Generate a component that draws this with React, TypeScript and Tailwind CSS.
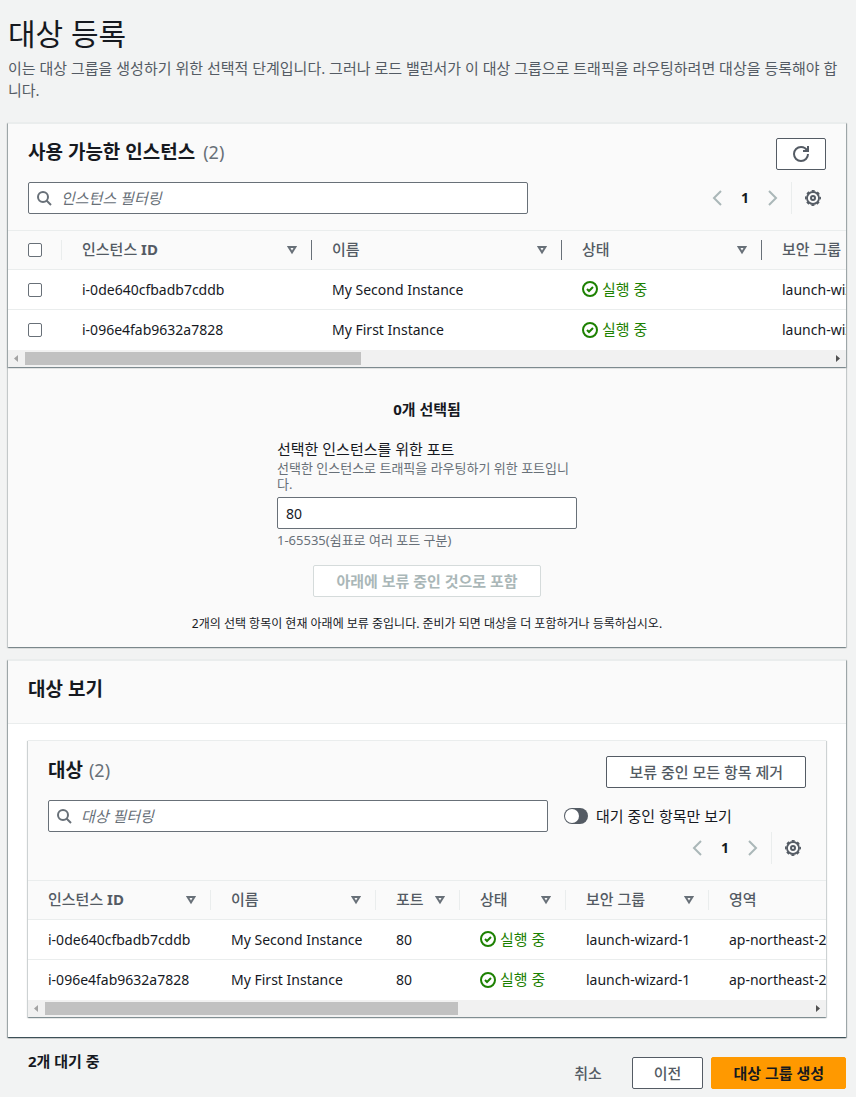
/**
 * Target registration page
 */

import React from 'react';
import clsx from 'clsx';

// ============== DATA ==============

type Instance = {
  id: string;
  name: string;
  port: string;
  securityGroup: string;
  zone: string;
};

const instances: Instance[] = [
  {
    id: 'i-0de640cfbadb7cddb',
    name: 'My Second Instance',
    port: '80',
    securityGroup: 'launch-wizard-1',
    zone: 'ap-northeast-2a',
  },
  {
    id: 'i-096e4fab9632a7828',
    name: 'My First Instance',
    port: '80',
    securityGroup: 'launch-wizard-1',
    zone: 'ap-northeast-2a',
  },
];

const panelShadow =
  'border-t border-[#eaeded] shadow-[0_1px_1px_0_rgba(0,28,36,0.3),1px_1px_1px_0_rgba(0,28,36,0.15),-1px_1px_1px_0_rgba(0,28,36,0.15)]';

// ============== ICONS ==============

function SearchIcon() {
  return (
    <svg viewBox="0 0 16 16" className="size-4 shrink-0" fill="none" stroke="#687078" strokeWidth="2">
      <circle cx="7" cy="7" r="5" />
      <path d="m15 15-4.5-4.5" />
    </svg>
  );
}

function RefreshIcon() {
  return (
    <svg viewBox="0 0 16 16" className="size-4 shrink-0" fill="none" stroke="#545b64" strokeWidth="2">
      <path d="M15 8c0 3.87-3.13 7-7 7s-7-3.13-7-7 3.13-7 7-7c2.79 0 5.2 1.63 6.33 4" />
      <path d="M10 5h5V0" />
    </svg>
  );
}

function ChevronIcon({ next }: { next?: boolean }) {
  return (
    <svg viewBox="0 0 16 16" className="size-4" fill="none" stroke="#aab7b8" strokeWidth="2">
      <path d={next ? 'm4 1 7 7-7 7' : 'm12 1-7 7 7 7'} />
    </svg>
  );
}

function GearIcon() {
  return (
    <svg viewBox="0 0 16 16" className="size-4" fill="none" stroke="#545b64">
      <circle cx="8" cy="8" r="6" strokeWidth="1.8" />
      {/* eight teeth, one centred on each axis and diagonal */}
      <circle cx="8" cy="8" r="7.2" strokeWidth="1.6" strokeDasharray="3 2.655" strokeDashoffset="1.5" />
      <circle cx="8" cy="8" r="2" strokeWidth="2" />
    </svg>
  );
}

function SortIcon() {
  return (
    <svg viewBox="0 0 10 10" className="size-[10px]" fill="none" stroke="#687078" strokeWidth="2">
      <path d="M1.7 2h6.6L5 7.4z" />
    </svg>
  );
}

function CheckCircleIcon() {
  return (
    <svg viewBox="0 0 16 16" className="size-4" fill="none" stroke="#1d8102" strokeWidth="2">
      <circle cx="8" cy="8" r="7" />
      <path d="m5 8 2 2 4-4" />
    </svg>
  );
}

// ============== SHARED PARTS ==============

function Button({ variant = 'normal', className = 'px-[21px]', children, ...rest }: {
  variant?: 'normal' | 'primary' | 'link';
} & React.ButtonHTMLAttributes<HTMLButtonElement>) {
  return (
    <button
      type="button"
      className={clsx(
        'flex h-8 items-center justify-center rounded-xs border text-[15px]',
        variant === 'normal' && 'border-[#545b64] bg-white font-medium text-[#545b64] disabled:border-[#d5dbdb] disabled:font-bold disabled:text-[#aab7b8]',
        variant === 'primary' && 'border-[#ff9900] bg-[#ff9900] font-bold text-[#16191f]',
        variant === 'link' && 'border-transparent font-medium text-[#545b64]',
        className,
      )}
      {...rest}
    >
      {children}
    </button>
  );
}

function SearchBox({ label }: { label: string }) {
  return (
    <div className="flex h-8 w-full max-w-[500px] items-center gap-2 rounded-xs border border-[#687078] bg-white px-[7px]">
      <SearchIcon />
      <input
        type="search"
        aria-label={label}
        placeholder={label}
        className="min-w-0 flex-1 pl-px text-[15px] outline-none placeholder:text-[#687078] placeholder:italic"
      />
    </div>
  );
}

function Pagination() {
  return (
    <div className="flex h-8 items-center">
      <button type="button" aria-label="이전 페이지" className="px-1">
        <ChevronIcon />
      </button>
      <span className="w-8 text-center text-sm font-bold">1</span>
      <button type="button" aria-label="다음 페이지" className="px-1">
        <ChevronIcon next />
      </button>
      <button type="button" aria-label="기본 설정" className="ml-[6px] flex h-8 items-center border-l border-[#eaeded] pr-[5px] pl-[13px]">
        <GearIcon />
      </button>
    </div>
  );
}

function ColumnHeader({ children, sortable = true, dark }: {
  children: React.ReactNode;
  sortable?: boolean;
  dark?: boolean;
}) {
  return (
    <th className="border-b border-[#eaeded] bg-[#fafafa] p-0 text-left text-[15px] font-medium text-[#545b64]">
      <div
        className={clsx(
          'flex h-5 items-center pr-[14px] pl-5',
          sortable && 'border-r',
          dark ? 'border-[#687078]' : 'border-[#eaeded]',
        )}
      >
        {sortable ? (
          <button type="button" className="flex w-full items-center justify-between">
            <span>{children}</span>
            <SortIcon />
          </button>
        ) : (
          children
        )}
      </div>
    </th>
  );
}

function Cell({ children }: { children: React.ReactNode }) {
  return <td className="px-5 py-0 whitespace-nowrap group-not-last:border-b group-not-last:border-[#eaeded]">{children}</td>;
}

function Status() {
  return (
    <span className="flex items-center gap-1 text-[15px] text-[#1d8102]">
      <CheckCircleIcon />
      실행 중
    </span>
  );
}

function RowCheckbox({ label }: { label: string }) {
  return (
    <input
      type="checkbox"
      aria-label={label}
      className="block size-[14px] appearance-none rounded-xs border border-[#687078] bg-white"
    />
  );
}

function ScrollBar({ thumb }: { thumb: number }) {
  return (
    <div className="flex h-[17px] items-center bg-[#f1f1f1]">
      <svg viewBox="0 0 17 17" className="size-[17px] shrink-0" fill="#a3a3a3">
        <path d="M10 5v7L6 8.5z" />
      </svg>
      <div className="flex-1">
        <div className="h-[13px] bg-[#c1c1c1]" style={{ width: `${thumb}%` }} />
      </div>
      <svg viewBox="0 0 17 17" className="size-[17px] shrink-0" fill="#505050">
        <path d="M7 5v7l4-3.5z" />
      </svg>
    </div>
  );
}

// ============== AVAILABLE INSTANCES ==============

function AvailableInstances() {
  return (
    <section className={clsx('bg-[#fafafa]', panelShadow)}>
      <div className={panelShadow}>
        <div className="px-5 pt-[14px] pb-4">
          <div className="flex items-start justify-between">
            <h2 className="flex gap-2 text-[19px] leading-7 font-bold">
              사용 가능한 인스턴스
              <span className="text-lg leading-7 font-normal text-[#687078]">(2)</span>
            </h2>
            <Button aria-label="새로 고침" className="w-[50px]">
              <RefreshIcon />
            </Button>
          </div>
          <div className="mt-3 flex items-center justify-between">
            <SearchBox label="인스턴스 필터링" />
            <Pagination />
          </div>
        </div>

        <div className="overflow-hidden border-t border-[#eaeded]">
          <table className="w-[954px] table-fixed border-separate border-spacing-0 bg-white text-sm">
            <colgroup>
              <col className="w-[54px]" />
              <col className="w-[250px]" />
              <col className="w-[250px]" />
              <col className="w-[200px]" />
              <col className="w-[200px]" />
            </colgroup>
            <thead>
              <tr className="h-[39px]">
                <ColumnHeader sortable={false}>
                  <div className="-mr-[14px] flex h-5 flex-1 items-center border-r border-[#eaeded]">
                    <RowCheckbox label="모두 선택" />
                  </div>
                </ColumnHeader>
                <ColumnHeader dark>인스턴스 <b>ID</b></ColumnHeader>
                <ColumnHeader dark>이름</ColumnHeader>
                <ColumnHeader dark>상태</ColumnHeader>
                <ColumnHeader dark>보안 그룹</ColumnHeader>
              </tr>
            </thead>
            <tbody>
              {instances.map((item) => (
                <tr key={item.id} className="group h-10">
                  <Cell><RowCheckbox label={item.name} /></Cell>
                  <Cell>{item.id}</Cell>
                  <Cell>{item.name}</Cell>
                  <Cell><Status /></Cell>
                  <Cell>{item.securityGroup}</Cell>
                </tr>
              ))}
            </tbody>
          </table>
        </div>
        <ScrollBar thumb={41.8} />
      </div>

      <div className="flex flex-col items-center px-5 pt-[31px] pb-3">
        <p className="text-[15px] leading-[22px] font-bold">0개 선택됨</p>
        <div className="mt-[18px] w-[300px]">
          <label htmlFor="port" className="block text-[15px] leading-[22px]">선택한 인스턴스를 위한 포트</label>
          <p className="text-[13px] leading-4 text-[#687078]">선택한 인스턴스로 트래픽을 라우팅하기 위한 포트입니다.</p>
          <input
            id="port"
            type="text"
            defaultValue="80"
            className="mt-[5px] block h-8 w-full rounded-xs border border-[#687078] bg-white px-2 text-sm"
          />
          <p className="mt-[3px] text-[13px] leading-4 text-[#687078]">1-65535(쉼표로 여러 포트 구분)</p>
        </div>
        <Button disabled className="mt-[17px] px-[22px]">아래에 보류 중인 것으로 포함</Button>
        <p className="mt-4 text-xs leading-[22px]">
          2개의 선택 항목이 현재 아래에 보류 중입니다. 준비가 되면 대상을 더 포함하거나 등록하십시오.
        </p>
      </div>
    </section>
  );
}

// ============== TARGETS ==============

function Targets() {
  return (
    <section className={clsx('mt-3 bg-white', panelShadow)}>
      <div className={clsx('pb-5', panelShadow)}>
        <div className="border-b border-[#eaeded] bg-[#fafafa] px-5 pt-[14px] pb-5">
          <h2 className="text-[19px] leading-7 font-bold">대상 보기</h2>
        </div>

        <div className={clsx('mx-5 mt-4 bg-[#fafafa]', panelShadow)}>
          <div className="px-5 pt-[15px] pb-4">
            <div className="flex items-start justify-between">
              <h3 className="flex gap-[6px] text-[19px] leading-7 font-bold">
                대상
                <span className="text-lg leading-7 font-normal text-[#687078]">(2)</span>
              </h3>
              <Button className="px-[22px]">보류 중인 모든 항목 제거</Button>
            </div>
            <div className="mt-3 flex items-center gap-4">
              <SearchBox label="대상 필터링" />
              <label className="flex shrink-0 items-center gap-2 text-[15px]">
                <input
                  type="checkbox"
                  role="switch"
                  className="h-4 w-6 appearance-none rounded-full bg-[#545b64] p-px before:block before:size-[14px] before:rounded-full before:bg-white checked:before:ml-2"
                />
                대기 중인 항목만 보기
              </label>
            </div>
            <div className="flex justify-end">
              <Pagination />
            </div>
          </div>

          <div className="overflow-hidden border-t border-[#eaeded]">
            <table className="w-[881px] table-fixed border-separate border-spacing-0 bg-white text-sm">
              <colgroup>
                <col className="w-[183px]" />
                <col className="w-[165px]" />
                <col className="w-[84px]" />
                <col className="w-[106px]" />
                <col className="w-[143px]" />
                <col className="w-[200px]" />
              </colgroup>
              <thead>
                <tr className="h-[39px]">
                  <ColumnHeader>인스턴스 <b>ID</b></ColumnHeader>
                  <ColumnHeader>이름</ColumnHeader>
                  <ColumnHeader>포트</ColumnHeader>
                  <ColumnHeader>상태</ColumnHeader>
                  <ColumnHeader>보안 그룹</ColumnHeader>
                  <ColumnHeader>영역</ColumnHeader>
                </tr>
              </thead>
              <tbody>
                {instances.map((item) => (
                  <tr key={item.id} className="group h-10">
                    <Cell>{item.id}</Cell>
                    <Cell>{item.name}</Cell>
                    <Cell>{item.port}</Cell>
                    <Cell><Status /></Cell>
                    <Cell>{item.securityGroup}</Cell>
                    <Cell>{item.zone}</Cell>
                  </tr>
                ))}
              </tbody>
            </table>
          </div>
          <ScrollBar thumb={54} />
        </div>
      </div>
    </section>
  );
}

// ============== PAGE ==============

export default function App() {
  return (
    <main className="min-h-screen bg-[#f2f3f3] pt-4 pr-[10px] pb-2 pl-2 font-['Noto_Sans','Noto_Sans_CJK_KR',sans-serif] text-[#16191f]">
      <h1 className="text-3xl leading-9">대상 등록</h1>
      <p className="mt-[5px] mb-[21px] text-[15px] leading-[22px] text-[#545b64]">
        이는 대상 그룹을 생성하기 위한 선택적 단계입니다. 그러나 로드 밸런서가 이 대상 그룹으로 트래픽을 라우팅하려면 대상을 등록해야 합니다.
      </p>

      <AvailableInstances />
      <Targets />

      <footer className="mt-[13px] flex items-start pl-5">
        <p className="text-[15px] font-bold">2개 대기 중</p>
        <div className="mt-[7px] ml-auto flex gap-2">
          <Button variant="link">취소</Button>
          <Button>이전</Button>
          <Button variant="primary">대상 그룹 생성</Button>
        </div>
      </footer>
    </main>
  );
}
